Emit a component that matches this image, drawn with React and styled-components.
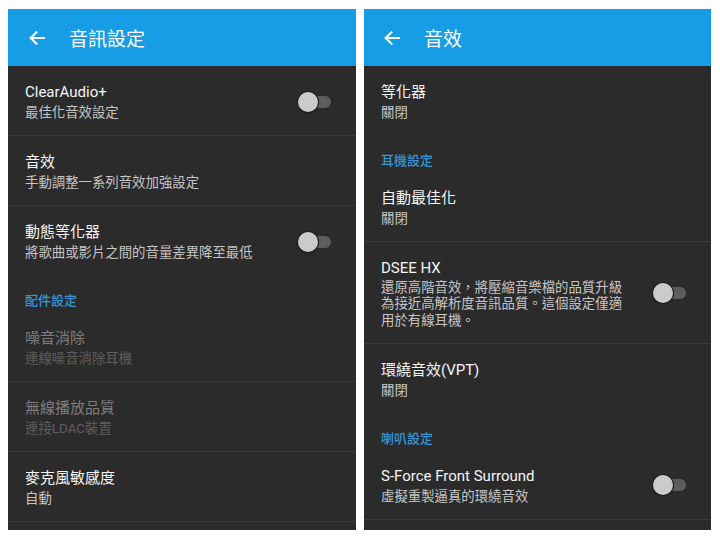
import React from "react";
import styled, { createGlobalStyle } from "styled-components";

const Global = createGlobalStyle`
  html, body { margin: 0; padding: 0; background: #ffffff; }
  body { font-family: Roboto, "Noto Sans CJK TC", "Noto Sans", sans-serif; }
  * { box-sizing: border-box; }
`;

const Page = styled.div`
  display: flex;
  gap: 8px;
  padding: 9px 0 0 8px;
  width: 720px;
  height: 540px;
`;

const Panel = styled.div`
  width: ${(p) => p.$w}px;
  height: 521px;
  background: #2b2b2b;
  display: flex;
  flex-direction: column;
  overflow: hidden;
`;

const Header = styled.div`
  height: 57px;
  flex: none;
  background: #179ce6;
  display: flex;
  align-items: center;
  padding-left: ${(p) => p.$pl}px;
  gap: 24px;
`;

const Title = styled.div`
  color: #ffffff;
  font-size: 19px;
  font-weight: 400;
  letter-spacing: 0;
`;

const Row = styled.div`
  display: flex;
  align-items: center;
  padding: 16px 24px 14px ${(p) => p.$pl}px;
  border-bottom: ${(p) => (p.$divider ? "1px solid #3b3b3b" : "none")};
`;

const Texts = styled.div`
  flex: 1;
  display: flex;
  flex-direction: column;
`;

const ItemTitle = styled.div`
  font-size: 15px;
  line-height: 21px;
  font-weight: 400;
  color: ${(p) => (p.$disabled ? "#7e7e7e" : "#f5f5f5")};
`;

const ItemSub = styled.div`
  margin-top: 1px;
  font-size: 13.4px;
  line-height: ${(p) => (p.$multi ? "16.3px" : "17px")};
  color: ${(p) => (p.$disabled ? "#5e5e5e" : "#c6c6c6")};
  max-width: ${(p) => (p.$multi ? "246px" : "none")};
`;

const Category = styled.div`
  padding: 17px 16px 2px ${(p) => p.$pl}px;
  font-size: 13px;
  line-height: 18px;
  font-weight: 500;
  color: #3497d8;
`;

const Toggle = styled.div`
  position: relative;
  width: 34px;
  height: 20px;
  flex: none;
  margin-left: 16px;
`;

const Track = styled.div`
  position: absolute;
  left: 8px;
  right: 1px;
  top: 4px;
  height: 12px;
  border-radius: 6px;
  background: #5d5d5d;
`;

const Thumb = styled.div`
  position: absolute;
  left: 0;
  top: 0;
  width: 20px;
  height: 20px;
  border-radius: 50%;
  background: #cbcbcb;
  box-shadow: 0 0 0 1px #1e1e1e, 0 1px 2px rgba(0, 0, 0, 0.5);
`;

const Back = () => (
  <svg width="16" height="14" viewBox="0 0 16 14" fill="none">
    <path d="M15 7H1.8M7.5 1.2L1.6 7l5.9 5.8" stroke="#fff" strokeWidth="2" strokeLinecap="square" />
  </svg>
);

const Switch = () => (
  <Toggle>
    <Track />
    <Thumb />
  </Toggle>
);

const Item = ({ title, sub, toggle, divider, disabled, multi, pl }) => (
  <Row $divider={divider} $pl={pl}>
    <Texts>
      <ItemTitle $disabled={disabled}>{title}</ItemTitle>
      <ItemSub $disabled={disabled} $multi={multi}>{sub}</ItemSub>
    </Texts>
    {toggle && <Switch />}
  </Row>
);

export default function App() {
  return (
    <>
      <Global />
      <Page>
        <Panel $w={348}>
          <Header $pl={21}>
            <Back />
            <Title>音訊設定</Title>
          </Header>
          <Item pl={17} title="ClearAudio+" sub="最佳化音效設定" toggle divider />
          <Item pl={17} title="音效" sub="手動調整一系列音效加強設定" divider />
          <Item pl={17} title="動態等化器" sub="將歌曲或影片之間的音量差異降至最低" toggle />
          <Category $pl={17}>配件設定</Category>
          <Item pl={17} title="噪音消除" sub="連線噪音消除耳機" disabled divider />
          <Item pl={17} title="無線播放品質" sub="連接LDAC裝置" disabled divider />
          <Item pl={17} title="麥克風敏感度" sub="自動" divider />
        </Panel>
        <Panel $w={347}>
          <Header $pl={20}>
            <Back />
            <Title>音效</Title>
          </Header>
          <Item pl={17} title="等化器" sub="關閉" />
          <Category $pl={17}>耳機設定</Category>
          <Item pl={17} title="自動最佳化" sub="關閉" divider />
          <Item
            pl={17}
            title="DSEE HX"
            sub="還原高階音效，將壓縮音樂檔的品質升級為接近高解析度音訊品質。這個設定僅適用於有線耳機。"
            toggle
            multi
            divider
          />
          <Item pl={17} title="環繞音效(VPT)" sub="關閉" />
          <Category $pl={17}>喇叭設定</Category>
          <Item pl={17} title="S-Force Front Surround" sub="虛擬重製逼真的環繞音效" toggle divider />
        </Panel>
      </Page>
    </>
  );
}
